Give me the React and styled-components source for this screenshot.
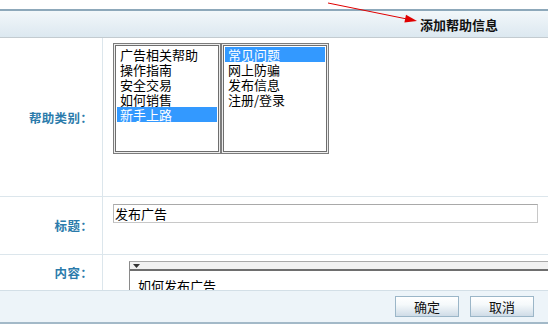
import React from 'react';
import styled, { createGlobalStyle } from 'styled-components';

const Global = createGlobalStyle`
  html, body { margin: 0; padding: 0; background: #fff; }
  body { font-family: "Noto Sans CJK SC", "Liberation Sans", sans-serif; }
  * { box-sizing: border-box; }
`;

const Page = styled.div`
  position: relative;
  width: 548px;
  height: 324px;
  overflow: hidden;
  display: flex;
  flex-direction: column;
  background: #fff;
`;

const TopGap = styled.div`
  flex: none;
  height: 9px;
`;

const Header = styled.div`
  flex: none;
  height: 29px;
  border-top: 2px solid #8da8ba;
  border-bottom: 1px solid #c3cbd0;
  background: linear-gradient(#f2f7fa, #dce8f0);
  display: flex;
  align-items: center;
  justify-content: flex-end;
  padding-right: 50px;
`;

const Title = styled.h1`
  margin: 0;
  font-size: 13px;
  font-weight: bold;
  color: #111;
  line-height: 15px;
`;

const Arrow = styled.svg`
  position: absolute;
  left: 0;
  top: 0;
  pointer-events: none;
`;

const Form = styled.div`
  flex: none;
  height: 252px;
  display: flex;
  flex-direction: column;
  overflow: hidden;
`;

const Row = styled.div`
  flex: none;
  height: ${(p) => p.$h}px;
  display: grid;
  grid-template-columns: 103px 1fr;
  grid-template-rows: minmax(0, 1fr);
  border-bottom: ${(p) => (p.$last ? 'none' : '1px solid #dce6ec')};
  overflow: hidden;
`;

const Label = styled.div`
  border-right: 1px solid #dce6ec;
  display: flex;
  align-items: center;
  justify-content: flex-end;
  padding-right: 9px;
  font-size: 12.5px;
  font-weight: bold;
  color: #2b7bab;
  letter-spacing: 0.3px;
`;

const Value = styled.div`
  display: flex;
  align-items: flex-start;
  padding: ${(p) => p.$pad};
  min-width: 0;
  overflow: hidden;
`;

const ListBox = styled.div`
  width: 108px;
  height: 111px;
  border: 1px solid #7c7c7c;
  box-shadow: inset 0 0 0 1px #ececec, inset 0 0 0 2px #6e6e6e;
  padding: 3px 3px;
  background: #fff;
  overflow: hidden;
`;

const Option = styled.div`
  height: 15px;
  line-height: 15px;
  font-size: 13px;
  padding-left: 3px;
  white-space: nowrap;
  color: ${(p) => (p.$sel ? '#fff' : '#000')};
  background: ${(p) => (p.$sel ? '#3399ff' : 'transparent')};
`;

const TextInput = styled.input`
  width: 425px;
  height: 19px;
  border: 1px solid #c8c8c8;
  border-top-color: #a9a9a9;
  border-left-color: #b8b8b8;
  padding: 0 1px;
  font-family: "Noto Sans CJK SC", "Liberation Sans", sans-serif;
  font-size: 13px;
  color: #000;
  outline: none;
  background: #fff;
`;

const Editor = styled.div`
  flex: 1;
  margin-right: -4px;
  border-top: 1px solid #a8a8a8;
  border-left: 1px solid #8a8a8a;
  background: #fff;
  height: 60px;
`;

const EditorBar = styled.div`
  height: 9px;
  background: #f1f1f1;
  border-bottom: 2px solid #6e6e6e;
  display: flex;
  align-items: center;
  padding-left: 3px;
`;

const DropArrow = styled.svg`
  display: block;
`;

const EditorBody = styled.div`
  padding: 7px 0 0 8px;
  font-size: 13px;
  line-height: 15px;
  color: #000;
`;

const Footer = styled.div`
  flex: none;
  height: 34px;
  border-top: 1px solid #d3dfe7;
  border-bottom: 2px solid #a3b9c8;
  background: #edf4f9;
  display: flex;
  align-items: center;
  justify-content: flex-end;
  gap: 11px;
  padding-right: 14px;
`;

const Button = styled.button`
  width: 64px;
  height: 21px;
  border: 1px solid #9bb6c8;
  background: linear-gradient(#ffffff 0%, #f5f9fb 40%, #cfdce7 100%);
  font-family: "Noto Sans CJK SC", "Liberation Sans", sans-serif;
  font-size: 13px;
  line-height: 17px;
  color: #111;
  padding: 0;
  cursor: pointer;
`;

const cats1 = ['广告相关帮助', '操作指南', '安全交易', '如何销售', '新手上路'];
const cats2 = ['常见问题', '网上防骗', '发布信息', '注册/登录'];

export default function App() {
  return (
    <>
      <Global />
      <Page>
        <TopGap />
        <Header>
          <Title>添加帮助信息</Title>
        </Header>
        <Form>
          <Row $h={159}>
            <Label>帮助类别：</Label>
            <Value $pad="5px 0 0 10px">
              <ListBox>
                {cats1.map((c, i) => (
                  <Option key={c} $sel={i === 4}>{c}</Option>
                ))}
              </ListBox>
              <ListBox>
                {cats2.map((c, i) => (
                  <Option key={c} $sel={i === 0}>{c}</Option>
                ))}
              </ListBox>
            </Value>
          </Row>
          <Row $h={58}>
            <Label>标题：</Label>
            <Value $pad="7px 0 0 10px">
              <TextInput defaultValue="发布广告" readOnly />
            </Value>
          </Row>
          <Row $h={35} $last>
            <Label>内容：</Label>
            <Value $pad="6px 0 0 26px">
              <Editor>
                <EditorBar>
                  <DropArrow width="7" height="4" viewBox="0 0 7 4">
                    <polygon points="0,0 7,0 3.5,4" fill="#333" />
                  </DropArrow>
                </EditorBar>
                <EditorBody>如何发布广告</EditorBody>
              </Editor>
            </Value>
          </Row>
        </Form>
        <Footer>
          <Button>确定</Button>
          <Button>取消</Button>
        </Footer>
        <Arrow width="548" height="40" viewBox="0 0 548 40">
          <line x1="328" y1="3" x2="407" y2="19" stroke="#e00000" strokeWidth="1" />
          <polygon points="417,21 406,14.7 404.4,22.5" fill="#e00000" />
        </Arrow>
      </Page>
    </>
  );
}
